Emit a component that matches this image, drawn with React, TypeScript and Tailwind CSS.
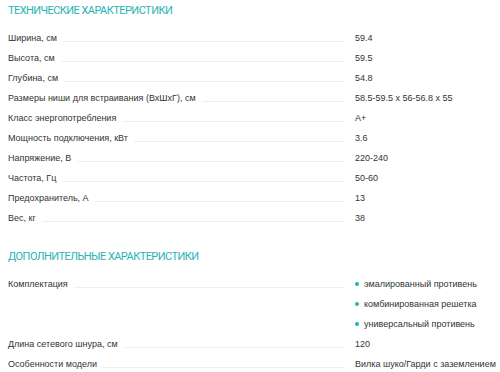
const tech: [string, string][] = [
  ["Ширина, см", "59.4"],
  ["Высота, см", "59.5"],
  ["Глубина, см", "54.8"],
  ["Размеры ниши для встраивания (ВхШхГ), см", "58.5-59.5 x 56-56.8 x 55"],
  ["Класс энергопотребления", "A+"],
  ["Мощность подключения, кВт", "3.6"],
  ["Напряжение, В", "220-240"],
  ["Частота, Гц", "50-60"],
  ["Предохранитель, А", "13"],
  ["Вес, кг", "38"],
];

const kit = ["эмалированный противень", "комбинированная решетка", "универсальный противень"];

const Row = ({ label, children }: { label: string; children: React.ReactNode }) => (
  <div className="flex items-start">
    <div className="flex w-[341px] shrink-0 items-start">
      <span className="h-5 leading-5 whitespace-nowrap">{label}</span>
      <span className="mr-1 ml-[6px] mt-[13px] flex-1 border-b border-[#efefef]" />
    </div>
    <div className="ml-[6px] whitespace-nowrap">{children}</div>
  </div>
);

export default function App() {
  return (
    <div className="h-[372px] w-[500px] overflow-hidden bg-white px-2 font-['Liberation_Sans',Arial,sans-serif] text-[9px] text-[#333]">
      <h2 className="pt-[1px] font-['Roboto',sans-serif] text-[11px] leading-5 tracking-[-0.55px] text-[#2ab3b5]">ТЕХНИЧЕСКИЕ ХАРАКТЕРИСТИКИ</h2>
      <div className="mt-[7px]">
        {tech.map(([l, v]) => (
          <Row key={l} label={l}>
            <span className="leading-5">{v}</span>
          </Row>
        ))}
      </div>
      <h2 className="mt-[19px] font-['Roboto',sans-serif] text-[11px] leading-5 tracking-[-0.55px] text-[#2ab3b5]">ДОПОЛНИТЕЛЬНЫЕ ХАРАКТЕРИСТИКИ</h2>
      <div className="mt-[7px]">
        <Row label="Комплектация">
          {kit.map((k) => (
            <div key={k} className="flex h-5 items-center gap-[5px] leading-5">
              <span className="h-[4px] w-[4px] rounded-full bg-[#2ab3b5]" />
              {k}
            </div>
          ))}
        </Row>
        <Row label="Длина сетевого шнура, см">
          <span className="leading-5">120</span>
        </Row>
        <Row label="Особенности модели">
          <span className="leading-5">Вилка шуко/Гарди с заземлением</span>
        </Row>
      </div>
    </div>
  );
}
